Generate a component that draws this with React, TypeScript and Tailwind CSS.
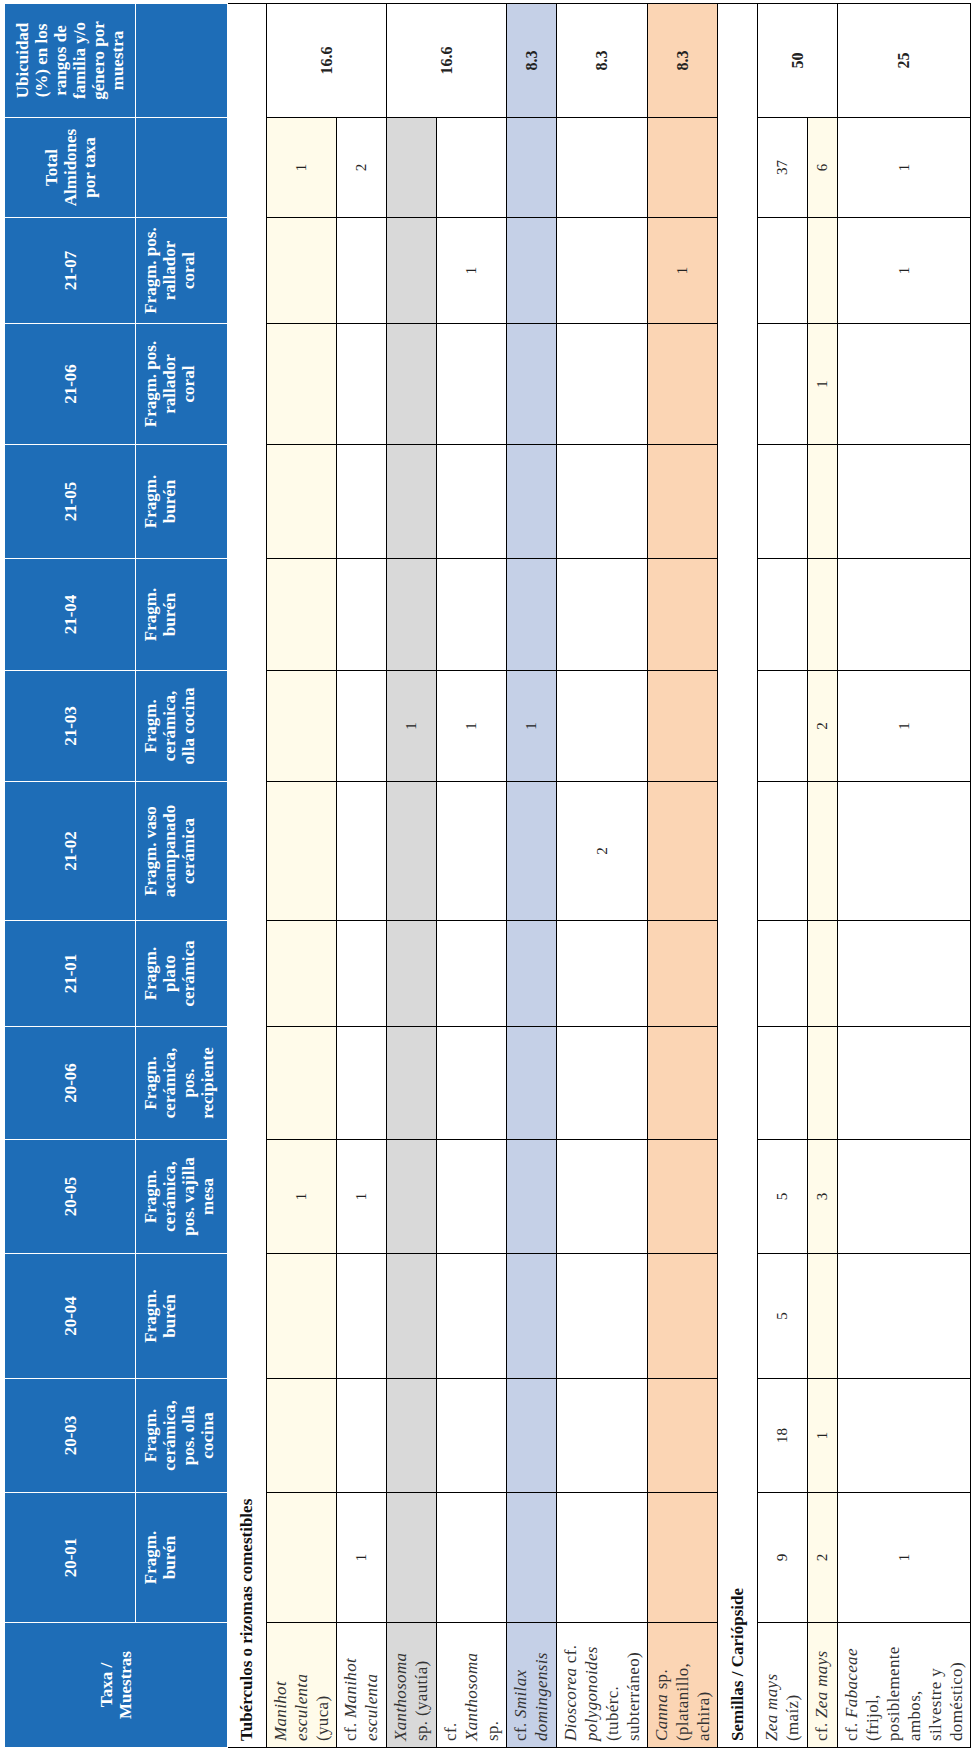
import React from "react";

type Sample = { id: string; w: number; desc: string[] };

const samples: Sample[] = [
  { id: "20-01", w: 130, desc: ["Fragm.", "burén"] },
  { id: "20-03", w: 114, desc: ["Fragm.", "cerámica,", "pos. olla", "cocina"] },
  { id: "20-04", w: 125, desc: ["Fragm.", "burén"] },
  { id: "20-05", w: 114, desc: ["Fragm.", "cerámica,", "pos. vajilla", "mesa"] },
  { id: "20-06", w: 113, desc: ["Fragm.", "cerámica,", "pos.", "recipiente"] },
  { id: "21-01", w: 106, desc: ["Fragm.", "plato", "cerámica"] },
  { id: "21-02", w: 139, desc: ["Fragm. vaso", "acampanado", "cerámica"] },
  { id: "21-03", w: 111, desc: ["Fragm.", "cerámica,", "olla cocina"] },
  { id: "21-04", w: 112, desc: ["Fragm.", "burén"] },
  { id: "21-05", w: 114, desc: ["Fragm.", "burén"] },
  { id: "21-06", w: 121, desc: ["Fragm. pos.", "rallador", "coral"] },
  { id: "21-07", w: 106, desc: ["Fragm. pos.", "rallador", "coral"] },
];

type Row = {
  label: React.ReactNode;
  h: string;
  bg: string;
  values: Record<string, string>;
  total?: string;
  // ubicuidad cell; skip when covered by the row above
  ubic?: { value: string; span: number; bg: string };
};

const I = ({ children }: { children: React.ReactNode }) => <i>{children}</i>;

const tuberculos: Row[] = [
  {
    label: (
      <>
        <I>Manihot</I>
        <br />
        <I>esculenta</I>
        <br />
        (yuca)
      </>
    ),
    h: "h-[70px]",
    bg: "bg-[#fffbea]",
    values: { "20-05": "1" },
    total: "1",
    ubic: { value: "16.6", span: 2, bg: "bg-white" },
  },
  {
    label: (
      <>
        cf. <I>Manihot</I>
        <br />
        <I>esculenta</I>
      </>
    ),
    h: "h-[50px]",
    bg: "bg-white",
    values: { "20-01": "1", "20-05": "1" },
    total: "2",
  },
  {
    label: (
      <>
        <I>Xanthosoma</I>
        <br />
        sp. (yautía)
      </>
    ),
    h: "h-[50px]",
    bg: "bg-[#d9d9d9]",
    values: { "21-03": "1" },
    ubic: { value: "16.6", span: 2, bg: "bg-white" },
  },
  {
    label: (
      <>
        cf.
        <br />
        <I>Xanthosoma</I>
        <br />
        sp.
      </>
    ),
    h: "h-[70px]",
    bg: "bg-white",
    values: { "21-03": "1", "21-07": "1" },
  },
  {
    label: (
      <>
        cf. <I>Smilax</I>
        <br />
        <I>domingensis</I>
      </>
    ),
    h: "h-[50px]",
    bg: "bg-[#c5d0e7]",
    values: { "21-03": "1" },
    ubic: { value: "8.3", span: 1, bg: "bg-[#c5d0e7]" },
  },
  {
    label: (
      <>
        <I>Dioscorea</I> cf.
        <br />
        <I>polygonoides</I>
        <br />
        (tubérc.
        <br />
        subterráneo)
      </>
    ),
    h: "h-[91px]",
    bg: "bg-white",
    values: { "21-02": "2" },
    ubic: { value: "8.3", span: 1, bg: "bg-white" },
  },
  {
    label: (
      <>
        <I>Canna</I> sp.
        <br />
        (platanillo,
        <br />
        achira)
      </>
    ),
    h: "h-[70px]",
    bg: "bg-[#fbd5b4]",
    values: { "21-07": "1" },
    ubic: { value: "8.3", span: 1, bg: "bg-[#fbd5b4]" },
  },
];

const semillas: Row[] = [
  {
    label: (
      <>
        <I>Zea mays</I>
        <br />
        (maíz)
      </>
    ),
    h: "h-[50px]",
    bg: "bg-white",
    values: { "20-01": "9", "20-03": "18", "20-04": "5", "20-05": "5" },
    total: "37",
    ubic: { value: "50", span: 2, bg: "bg-white" },
  },
  {
    label: (
      <>
        cf. <I>Zea mays</I>
      </>
    ),
    h: "h-[30px]",
    bg: "bg-[#fffbea]",
    values: { "20-01": "2", "20-03": "1", "20-05": "3", "21-03": "2", "21-06": "1" },
    total: "6",
  },
  {
    label: (
      <>
        cf. <I>Fabaceae</I>
        <br />
        (frijol,
        <br />
        posiblemente
        <br />
        ambos,
        <br />
        silvestre y
        <br />
        doméstico)
      </>
    ),
    h: "h-[133px]",
    bg: "bg-white",
    values: { "20-01": "1", "21-03": "1", "21-07": "1" },
    total: "1",
    ubic: { value: "25", span: 1, bg: "bg-white" },
  },
];

const cell = "border border-black text-center text-[15px] text-[#222]";

function DataRow({ row }: { row: Row }) {
  return (
    <tr className={row.h}>
      <td
        className={`border border-black align-top pl-[6px] pr-[2px] pt-[3px] whitespace-nowrap text-[17px] leading-[21px] tracking-[0.02em] text-[#333] ${row.bg}`}
      >
        {row.label}
      </td>
      {samples.map((s) => (
        <td key={s.id} className={`${cell} ${row.bg}`}>
          {row.values[s.id] ?? ""}
        </td>
      ))}
      <td className={`${cell} ${row.bg}`}>{row.total ?? ""}</td>
      {row.ubic && (
        <td rowSpan={row.ubic.span} className={`${cell} font-bold text-[16px] ${row.ubic.bg}`}>
          {row.ubic.value}
        </td>
      )}
    </tr>
  );
}

function SectionRow({ title, h }: { title: string; h: string }) {
  return (
    <tr className={h}>
      <td
        colSpan={15}
        className="border-x border-b border-black pl-[6px] font-bold text-[17px] text-[#111] whitespace-nowrap"
      >
        {title}
      </td>
    </tr>
  );
}

const head = "border border-white bg-[#1e6db7] text-white font-bold text-[17px] leading-[19px] text-center";

export default function App() {
  return (
    <div className="w-[977px] h-[1755px] overflow-hidden bg-white font-['Liberation_Serif',serif]">
      <div className="w-[1755px] h-[977px] origin-top-left -rotate-90 translate-y-[1755px] pl-[7px] pt-[4px]">
        <table className="table-fixed border-collapse w-[1744px]">
          <colgroup>
            <col className="w-[125px]" />
            {samples.map((s) => (
              <col key={s.id} style={{ width: s.w }} />
            ))}
            <col className="w-[100px]" />
            <col className="w-[114px]" />
          </colgroup>
          <thead>
            <tr className="h-[131px]">
              <th rowSpan={2} className={head}>
                Taxa /
                <br />
                Muestras
              </th>
              {samples.map((s) => (
                <th key={s.id} className={head}>
                  {s.id}
                </th>
              ))}
              <th className={head}>
                Total
                <br />
                Almidones
                <br />
                por taxa
              </th>
              <th className={head}>
                Ubicuidad
                <br />
                (%) en los
                <br />
                rangos de
                <br />
                familia y/o
                <br />
                género por
                <br />
                muestra
              </th>
            </tr>
            <tr className="h-[92px]">
              {samples.map((s) => (
                <th key={s.id} className={`${head} align-top pt-[5px] whitespace-nowrap`}>
                  {s.desc.map((line, i) => (
                    <div key={i}>{line}</div>
                  ))}
                </th>
              ))}
              <th className={head}></th>
              <th className={head}></th>
            </tr>
          </thead>
          <tbody>
            <SectionRow title="Tubérculos o rizomas comestibles" h="h-[39px]" />
            {tuberculos.map((r, i) => (
              <DataRow key={i} row={r} />
            ))}
            <SectionRow title="Semillas / Cariópside" h="h-[40px]" />
            {semillas.map((r, i) => (
              <DataRow key={i} row={r} />
            ))}
          </tbody>
        </table>
      </div>
    </div>
  );
}
